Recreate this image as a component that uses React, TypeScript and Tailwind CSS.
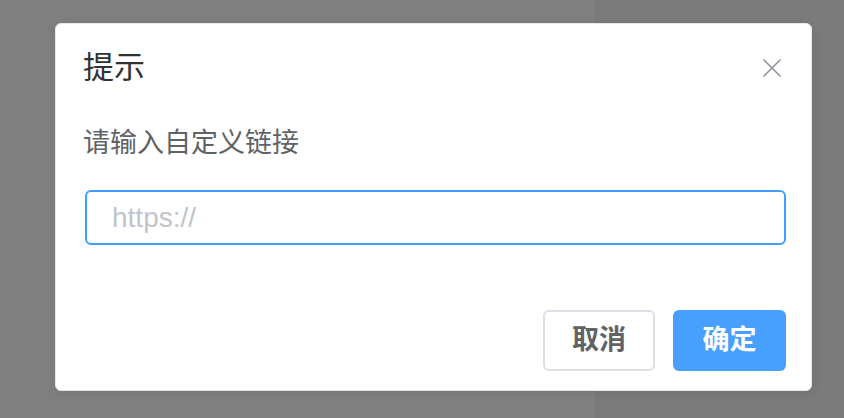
import { useState } from "react";

const font = {
  fontFamily: '"Helvetica Neue", "Liberation Sans", "Noto Sans CJK SC", sans-serif',
};

export default function App() {
  const [url, setUrl] = useState("");

  return (
    <div
      style={font}
      className="h-[418px] w-[844px] overflow-hidden bg-[linear-gradient(to_right,#808080_595px,#7b7b7b_595px)] pl-[55px] pt-[23px]"
    >
      <div className="flex h-[368px] w-[757px] flex-col rounded-[6px] border border-[#e4e7ed] bg-white pl-[29px] pr-[25px] shadow-[0_2px_12px_rgba(0,0,0,0.1)]">
        {/* Header */}
        <div className="mt-[26px] flex h-[36px] items-center justify-between">
          <h2 className="-ml-[2px] text-[31px] leading-[36px] text-[#303133]">提示</h2>
          <button
            type="button"
            aria-label="关闭"
            className="mr-[4px] flex h-[20px] w-[20px] items-center justify-center text-[#909399]"
          >
            <svg width="18" height="18" viewBox="0 0 18 18" fill="none">
              <path
                d="M1 1L17 17M17 1L1 17"
                stroke="currentColor"
                strokeWidth="1.6"
                strokeLinecap="round"
              />
            </svg>
          </button>
        </div>

        {/* Message */}
        <p className="-ml-[2px] mt-[41px] text-[27px] leading-[32px] text-[#606266]">请输入自定义链接</p>

        <input
          value={url}
          onChange={(e) => setUrl(e.target.value)}
          placeholder="https://"
          className="mt-[31px] h-[55px] w-[701px] rounded-[6px] border-2 border-[#409eff] px-[25px] text-[28px] text-[#606266] outline-none placeholder:text-[#c0c4cc]"
        />

        {/* Footer */}
        <div className="mt-[65px] flex justify-end gap-[18px]">
          <button
            type="button"
            className="h-[61px] w-[112px] rounded-[6px] border-2 border-[#dcdfe6] bg-white text-[27px] font-bold text-[#606266]"
          >
            取消
          </button>
          <button
            type="button"
            className="h-[61px] w-[113px] rounded-[6px] bg-[#47a0fd] text-[27px] font-bold text-white"
          >
            确定
          </button>
        </div>
      </div>
    </div>
  );
}
